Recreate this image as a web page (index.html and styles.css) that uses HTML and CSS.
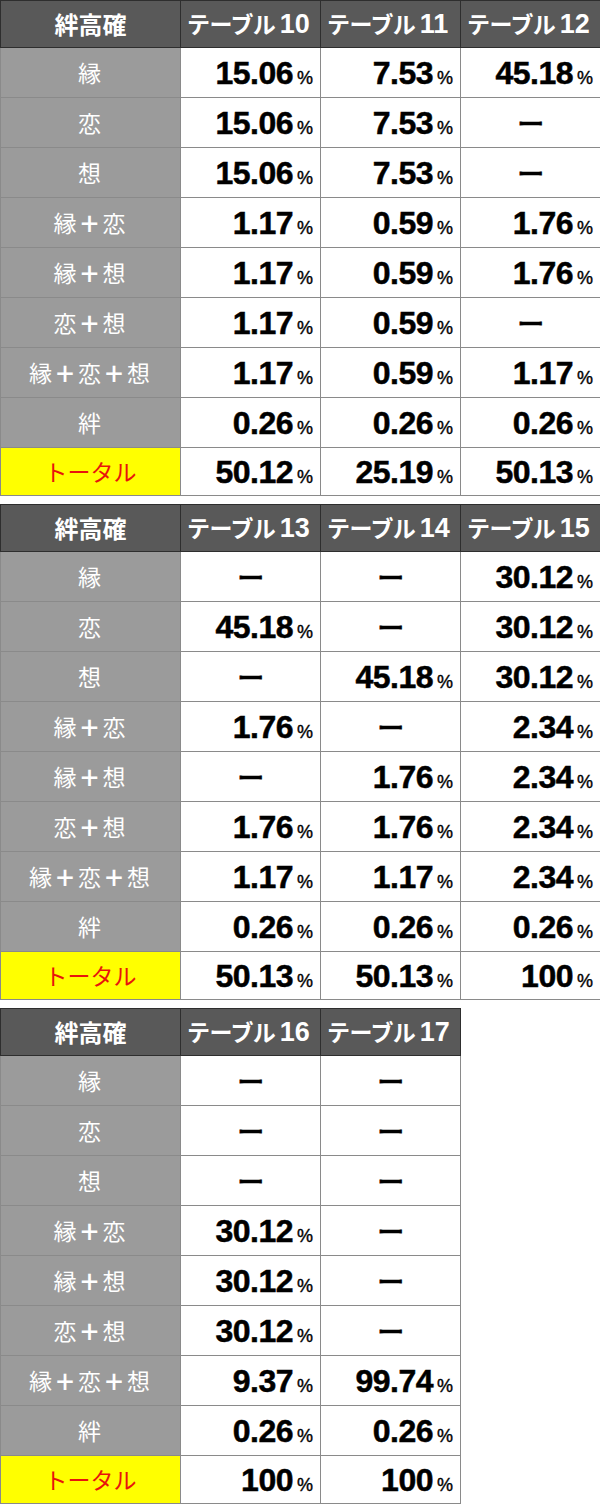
FILE: index.html
```html
<!DOCTYPE html>
<html lang="ja">
<head>
<meta charset="utf-8">
<link rel="stylesheet" href="styles.css">
</head>
<body>
<div class="page">
  <table class="tbl">
    <colgroup><col class="c-label"><col class="c-val"><col class="c-val"><col class="c-val"></colgroup>
    <tr class="head"><th class="h-label">絆高確</th><th>テーブル <span class="n">10</span></th><th>テーブル <span class="n">11</span></th><th>テーブル <span class="n">12</span></th></tr>
    <tr><th class="lab">縁</th><td>15.06<span class="p">%</span></td><td>7.53<span class="p">%</span></td><td>45.18<span class="p">%</span></td></tr>
    <tr><th class="lab">恋</th><td>15.06<span class="p">%</span></td><td>7.53<span class="p">%</span></td><td class="dash">ー</td></tr>
    <tr><th class="lab">想</th><td>15.06<span class="p">%</span></td><td>7.53<span class="p">%</span></td><td class="dash">ー</td></tr>
    <tr><th class="lab">縁<b>＋</b>恋</th><td>1.17<span class="p">%</span></td><td>0.59<span class="p">%</span></td><td>1.76<span class="p">%</span></td></tr>
    <tr><th class="lab">縁<b>＋</b>想</th><td>1.17<span class="p">%</span></td><td>0.59<span class="p">%</span></td><td>1.76<span class="p">%</span></td></tr>
    <tr><th class="lab">恋<b>＋</b>想</th><td>1.17<span class="p">%</span></td><td>0.59<span class="p">%</span></td><td class="dash">ー</td></tr>
    <tr><th class="lab">縁<b>＋</b>恋<b>＋</b>想</th><td>1.17<span class="p">%</span></td><td>0.59<span class="p">%</span></td><td>1.17<span class="p">%</span></td></tr>
    <tr><th class="lab">絆</th><td>0.26<span class="p">%</span></td><td>0.26<span class="p">%</span></td><td>0.26<span class="p">%</span></td></tr>
    <tr class="last"><th class="total">トータル</th><td>50.12<span class="p">%</span></td><td>25.19<span class="p">%</span></td><td>50.13<span class="p">%</span></td></tr>
  </table>

  <table class="tbl">
    <colgroup><col class="c-label"><col class="c-val"><col class="c-val"><col class="c-val"></colgroup>
    <tr class="head"><th class="h-label">絆高確</th><th>テーブル <span class="n">13</span></th><th>テーブル <span class="n">14</span></th><th>テーブル <span class="n">15</span></th></tr>
    <tr><th class="lab">縁</th><td class="dash">ー</td><td class="dash">ー</td><td>30.12<span class="p">%</span></td></tr>
    <tr><th class="lab">恋</th><td>45.18<span class="p">%</span></td><td class="dash">ー</td><td>30.12<span class="p">%</span></td></tr>
    <tr><th class="lab">想</th><td class="dash">ー</td><td>45.18<span class="p">%</span></td><td>30.12<span class="p">%</span></td></tr>
    <tr><th class="lab">縁<b>＋</b>恋</th><td>1.76<span class="p">%</span></td><td class="dash">ー</td><td>2.34<span class="p">%</span></td></tr>
    <tr><th class="lab">縁<b>＋</b>想</th><td class="dash">ー</td><td>1.76<span class="p">%</span></td><td>2.34<span class="p">%</span></td></tr>
    <tr><th class="lab">恋<b>＋</b>想</th><td>1.76<span class="p">%</span></td><td>1.76<span class="p">%</span></td><td>2.34<span class="p">%</span></td></tr>
    <tr><th class="lab">縁<b>＋</b>恋<b>＋</b>想</th><td>1.17<span class="p">%</span></td><td>1.17<span class="p">%</span></td><td>2.34<span class="p">%</span></td></tr>
    <tr><th class="lab">絆</th><td>0.26<span class="p">%</span></td><td>0.26<span class="p">%</span></td><td>0.26<span class="p">%</span></td></tr>
    <tr class="last"><th class="total">トータル</th><td>50.13<span class="p">%</span></td><td>50.13<span class="p">%</span></td><td>100<span class="p">%</span></td></tr>
  </table>

  <table class="tbl tbl-small">
    <colgroup><col class="c-label"><col class="c-val"><col class="c-val"></colgroup>
    <tr class="head"><th class="h-label">絆高確</th><th>テーブル <span class="n">16</span></th><th>テーブル <span class="n">17</span></th></tr>
    <tr><th class="lab">縁</th><td class="dash">ー</td><td class="dash">ー</td></tr>
    <tr><th class="lab">恋</th><td class="dash">ー</td><td class="dash">ー</td></tr>
    <tr><th class="lab">想</th><td class="dash">ー</td><td class="dash">ー</td></tr>
    <tr><th class="lab">縁<b>＋</b>恋</th><td>30.12<span class="p">%</span></td><td class="dash">ー</td></tr>
    <tr><th class="lab">縁<b>＋</b>想</th><td>30.12<span class="p">%</span></td><td class="dash">ー</td></tr>
    <tr><th class="lab">恋<b>＋</b>想</th><td>30.12<span class="p">%</span></td><td class="dash">ー</td></tr>
    <tr><th class="lab">縁<b>＋</b>恋<b>＋</b>想</th><td>9.37<span class="p">%</span></td><td>99.74<span class="p">%</span></td></tr>
    <tr><th class="lab">絆</th><td>0.26<span class="p">%</span></td><td>0.26<span class="p">%</span></td></tr>
    <tr class="last"><th class="total">トータル</th><td>100<span class="p">%</span></td><td>100<span class="p">%</span></td></tr>
  </table>
</div>
</body>
</html>
```

FILE: styles.css
```css
html, body {
  margin: 0;
  padding: 0;
  background: #ffffff;
}

.page {
  display: flex;
  flex-direction: column;
  gap: 8px;
  width: 600px;
}

.tbl {
  border-collapse: collapse;
  table-layout: fixed;
  width: 600px;
  font-family: "Noto Sans CJK JP", "Liberation Sans", sans-serif;
}

.tbl-small {
  width: 460px;
}

.c-label { width: 180px; }
.c-val { width: 140px; }

.tbl tr { height: 50px; }
.tbl tr.head { height: 47px; }
.tbl tr.last { height: 48px; }

.tbl th, .tbl td {
  padding: 0;
  border: 1px solid #8a8a8a;
  line-height: 1;
  white-space: nowrap;
}

.head th {
  background: #595959;
  color: #ffffff;
  border-color: #2e2e2e;
  font-weight: 700;
  font-size: 23px;
  text-align: left;
  padding-left: 6px;
  letter-spacing: -0.6px;
}

.head th.h-label {
  text-align: center;
  padding-left: 0;
  font-size: 24px;
  letter-spacing: 0;
}

.head .n {
  font-family: "Liberation Sans", sans-serif;
  font-size: 27px;
  font-weight: 700;
  letter-spacing: 0;
}

.lab {
  background: #9b9b9b;
  color: #ffffff;
  font-weight: 400;
  font-size: 23px;
  text-align: center;
  border-color: #4a4a4a;
  letter-spacing: 2px;
}

.lab b {
  font-weight: 900;
  font-size: 22px;
}

.total {
  background: #ffff00;
  color: #e8140c;
  font-weight: 400;
  font-size: 23px;
  text-align: center;
  border-color: #4a4a4a;
}

.tbl td {
  background: #ffffff;
  color: #000000;
  text-align: right;
  padding-right: 7px;
  font-family: "Liberation Sans", sans-serif;
  font-weight: 700;
  font-size: 32px;
  letter-spacing: -0.5px;
  -webkit-text-stroke: 0.5px #000;
}

.tbl td .p {
  font-size: 18px;
  font-weight: 400;
  margin-left: 4px;
  letter-spacing: 0;
  -webkit-text-stroke: 0.4px #000;
}

.tbl td.dash {
  text-align: center;
  padding-right: 0;
  font-family: "Noto Sans CJK JP", sans-serif;
  font-size: 27px;
  font-weight: 500;
  -webkit-text-stroke: 0.6px #000;
}
```
